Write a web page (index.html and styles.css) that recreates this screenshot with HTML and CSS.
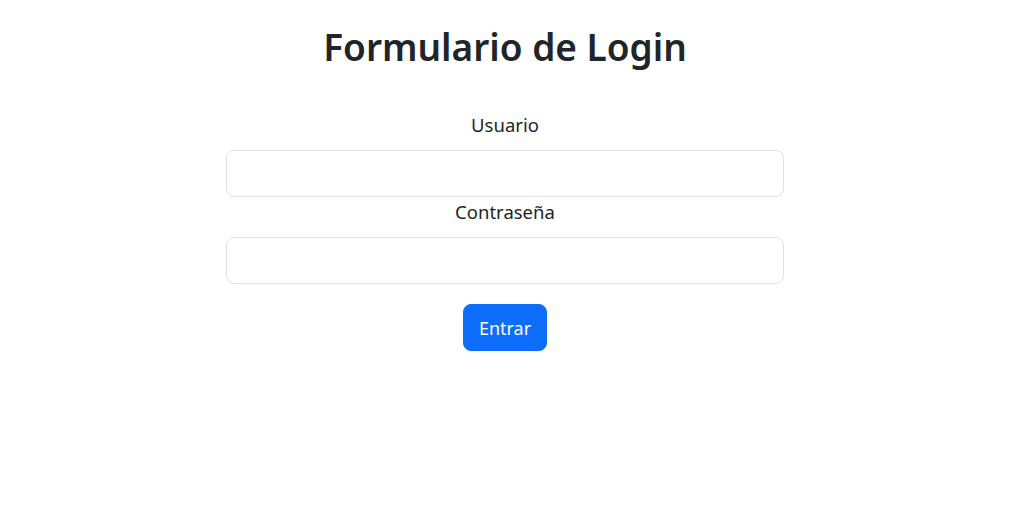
FILE: index.html
```html
<!DOCTYPE html>
<html lang="es">
<head>
<meta charset="utf-8">
<title>Login</title>
<link rel="stylesheet" href="styles.css">
</head>
<body>
<main class="page">
  <h1 class="title">Formulario de Login</h1>
  <form class="login-form">
    <label class="form-label" for="usuario">Usuario</label>
    <input class="form-control" type="text" id="usuario">
    <label class="form-label" for="pass">Contraseña</label>
    <input class="form-control" type="password" id="pass">
    <button class="btn-primary" type="button">Entrar</button>
  </form>
</main>
</body>
</html>
```
FILE: styles.css
```css
* { box-sizing: border-box; }
body {
  margin: 0;
  font-family: "Noto Sans", "Open Sans", sans-serif;
  color: #212529;
  background: #fff;
  font-size: 16px;
  line-height: 1.5;
}
.page {
  display: flex;
  flex-direction: column;
  align-items: center;
  padding-top: 23px;
}
.title {
  margin: 0 0 39px;
  font-size: 37px;
  font-weight: 600;
  line-height: 48px;
  text-align: center;
}
.login-form {
  width: 558px;
  display: flex;
  flex-direction: column;
  align-items: stretch;
}
.form-label {
  display: block;
  text-align: center;
  margin-bottom: 10px;
  font-size: 18.5px;
  line-height: 30px;
}
.form-control {
  display: block;
  width: 100%;
  height: 47px;
  padding: 8px 16px;
  font: inherit;
  font-size: 18.5px;
  border: 1px solid #dee2e6;
  border-radius: 8px;
  background: #fff;
  color: #212529;
}
.btn-primary {
  align-self: center;
  margin-top: 20px;
  height: 47px;
  padding: 0 15px;
  font: inherit;
  font-size: 18px;
  line-height: 30px;
  color: #fff;
  background: #0d6efd;
  border: 1px solid #0d6efd;
  border-radius: 8px;
}
```
